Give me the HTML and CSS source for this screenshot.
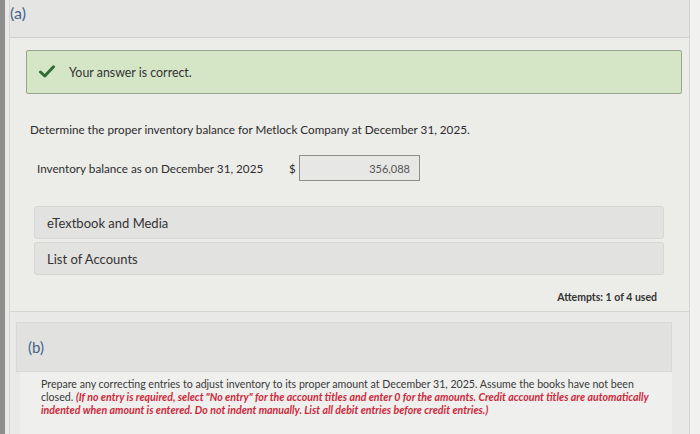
FILE: index.html
```html
<!DOCTYPE html>
<html>
<head>
<meta charset="utf-8">
<link rel="stylesheet" href="styles.css">
</head>
<body>
<div class="frame">
  <div class="page">
    <section class="part part-a">
      <div class="part-head"><span class="part-label">(a)</span></div>
      <div class="part-body">
        <div class="correct">
          <svg class="check" width="16" height="13" viewBox="0 0 16 13"><path d="M1.5 7 L5.8 11 L14.5 1.8" fill="none" stroke="#2f6b35" stroke-width="3" stroke-linecap="round" stroke-linejoin="round"/></svg>
          <span>Your answer is correct.</span>
        </div>
        <p class="question">Determine the proper inventory balance for Metlock Company at December 31, 2025.</p>
        <div class="answer-row">
          <span class="answer-label">Inventory balance as on December 31, 2025</span>
          <span class="dollar">$</span>
          <span class="answer-box">356,088</span>
        </div>
        <div class="resource">eTextbook and Media</div>
        <div class="resource resource-2">List of Accounts</div>
        <div class="attempts">Attempts: 1 of 4 used</div>
      </div>
    </section>
    <section class="part part-b">
      <div class="part-head-b"><span class="part-label">(b)</span></div>
      <div class="part-body-b">
        <p class="prompt">Prepare any correcting entries to adjust inventory to its proper amount at December 31, 2025. Assume the books have not been closed. <em class="note">(If no entry is required, select "No entry" for the account titles and enter 0 for the amounts. Credit account titles are automatically indented when amount is entered. Do not indent manually. List all debit entries before credit entries.)</em></p>
      </div>
    </section>
  </div>
</div>
</body>
</html>
```

FILE: styles.css
```css
* { box-sizing: border-box; }
html, body { margin: 0; padding: 0; }
body {
  width: 700px;
  height: 434px;
  overflow: hidden;
  background: #f1f1ef;
  font-family: Lato, "Open Sans", sans-serif;
  color: #333;
}
.frame {
  width: 690px;
  height: 434px;
  border-left: 5px solid #8e8e8c;
  border-right: 1px solid #d4d4d2;
  background: #e9e9e7;
  padding-left: 4px;
}
.page {
  border-left: 1px solid #d6d6d4;
  height: 100%;
}
.part-a {
  background: #ecece9;
  border-bottom: 1px solid #d3d3d1;
  height: 312px;
}
.part-head {
  height: 38px;
  background: #e5e5e3;
  border-bottom: 1px solid #cfcfcd;
  padding: 3px 0 0 0;
}
.part-label {
  font-size: 16px;
  color: #48618a;
}
.part-head-b .part-label { font-size: 15px; }
.part-body {
  padding: 12px 0 0 16px;
}
.correct {
  width: 656px;
  height: 44px;
  background: #d5e6c7;
  border: 1px solid #93a88d;
  border-radius: 2px;
  display: flex;
  align-items: center;
  padding-left: 12px;
  font-size: 12.4px;
  color: #333;
}
.check { margin-right: 14px; margin-top: -2px; }
.question {
  margin: 28px 0 0 4px;
  font-size: 11.7px;
  color: #2b2b2b;
}
.answer-row {
  display: flex;
  align-items: center;
  margin: 19px 0 0 11px;
  font-size: 11.7px;
  color: #2e2e2e;
}
.answer-label { width: 252px; }
.dollar { width: 10px; font-size: 11.5px; }
.answer-box {
  width: 121px;
  height: 26px;
  border: 1px solid #8d8d8b;
  background: #e7e7e5;
  display: flex;
  align-items: center;
  justify-content: flex-end;
  padding-right: 9px;
  font-size: 11px;
  color: #555;
}
.resource {
  margin: 25px 0 0 8px;
  width: 630px;
  height: 33px;
  background: #e2e2e0;
  border: 1px solid #d6d6d4;
  border-radius: 3px;
  display: flex;
  align-items: center;
  padding-left: 12px;
  font-size: 13px;
  color: #333;
}
.resource-2 {
  margin-top: 3px;
}
.attempts {
  margin: 16px 0 0 0;
  width: 631px;
  text-align: right;
  font-size: 10.5px;
  font-weight: 700;
  color: #333;
}
.part-b {
  padding: 10px 0 0 6px;
}
.part-head-b {
  width: 656px;
  height: 50px;
  background: #e1e1df;
  border: 1px solid #d9d9d7;
  display: flex;
  align-items: center;
  padding-left: 11px;
}
.part-body-b {
  width: 652px;
  height: 70px;
  margin-left: 4px;
  background: #efefed;
  padding: 6px 18px 0 21px;
}
.prompt {
  margin: 0;
  font-size: 10.6px;
  line-height: 13px;
  color: #3a3a3a;
}
.note {
  color: #cc2a3c;
  font-weight: 700;
}
```
